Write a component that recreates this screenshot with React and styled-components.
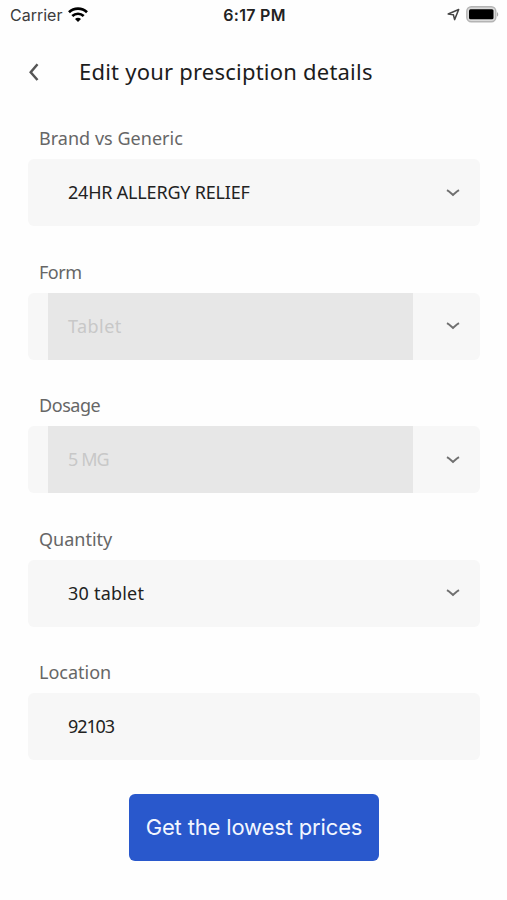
import React, { useState } from 'react'
import styled, { createGlobalStyle } from 'styled-components'

const App = () => {
  const [location, setLocation] = useState('92103')

  return (
    <Screen>
      <GlobalStyle />
      <StatusBar>
        <Carrier>
          Carrier
          <WifiIcon />
        </Carrier>
        <Clock>6:17 PM</Clock>
        <StatusIcons>
          <LocationIcon />
          <BatteryIcon />
        </StatusIcons>
      </StatusBar>
      <Header>
        <BackButton type='button' aria-label='Back'>
          <svg width='12' height='20' viewBox='0 0 12 20' fill='none'>
            <path d='M9.5 2.2L2.7 10.2L9.5 18' stroke='#555' strokeWidth='2.5' />
          </svg>
        </BackButton>
        <Title>Edit your presciption details</Title>
      </Header>
      <Form onSubmit={e => e.preventDefault()}>
        <SelectField label='Brand vs Generic' labelSpacing={0.03} value='24HR ALLERGY RELIEF' spacing={-0.2} />
        <SelectField label='Form' labelSpacing={-0.5} value='Tablet' spacing={0.45} disabled />
        <SelectField label='Dosage' labelSpacing={-0.45} value='5 MG' spacing={-0.9} disabled />
        <SelectField label='Quantity' value='30 tablet' spacing={0.22} />
        <Field>
          <Label htmlFor='location'>Location</Label>
          <Box>
            <Input
              id='location'
              value={location}
              onChange={e => setLocation(e.target.value)}
            />
          </Box>
        </Field>
        <SubmitButton type='submit'>Get the lowest prices</SubmitButton>
      </Form>
    </Screen>
  )
}

const SelectField = ({ label, value, disabled, spacing, labelSpacing }) => (
  <Field>
    <Label $spacing={labelSpacing}>{label}</Label>
    <Box>
      <Value $disabled={disabled} $spacing={spacing}>
        <span>{value}</span>
      </Value>
      <Arrow>
        <svg width='14' height='8' viewBox='0 0 14 8' fill='none'>
          <path d='M1 1.2C3 2.3 4.8 4 7 5.9C9.2 4 11 2.3 13 1.2' stroke='#707070' strokeWidth='2' />
        </svg>
      </Arrow>
    </Box>
  </Field>
)

const WifiIcon = () => (
  <svg width='20' height='15' viewBox='0 0 20 15' fill='none' stroke='#000' strokeWidth='2.7'>
    <path d='M1 5.3C6 0.5 14 0.5 19 5.3' />
    <path d='M4.3 9C7.5 6 12.5 6 15.7 9' />
    <path d='M10 15L7 12C8.7 10.3 11.3 10.3 13 12Z' fill='#000' stroke='none' />
  </svg>
)

const LocationIcon = () => (
  <svg width='13' height='13' viewBox='0 0 13 13' fill='none'>
    <path d='M1.2 6L11.7 1.5L7.6 11.6L6.4 6.8Z' stroke='#444' strokeWidth='1.5' strokeLinejoin='round' />
  </svg>
)

const BatteryIcon = () => (
  <svg width='33' height='17' viewBox='0 0 33 17'>
    <rect x='0.8' y='0.8' width='29' height='15' rx='4.5' fill='#dadada' stroke='#b4b4b4' strokeWidth='1.4' />
    <rect x='3' y='3.3' width='24.5' height='10' rx='1.5' fill='#000' />
    <path d='M31 6.2C32.6 6.8 32.6 10 31 10.6Z' fill='#aaa' />
  </svg>
)

const GlobalStyle = createGlobalStyle`
  body {
    margin: 0;
    background: #fff;
  }

  * {
    box-sizing: border-box;
  }
`

const Screen = styled.div`
  height: 900px;
  overflow: hidden;
  background: #fefefe;
  font-family: 'Noto Sans', sans-serif;
`

const StatusBar = styled.div`
  display: grid;
  grid-template-columns: 1fr auto 1fr;
  align-items: center;
  height: 29px;
  padding: 0 8px 0 10px;
  font-family: Inter, sans-serif;
  font-size: 16px;
`

const Carrier = styled.div`
  display: flex;
  align-items: center;
  gap: 6px;
  color: #3c3c3c;
`

const Clock = styled.div`
  font-weight: 600;
  letter-spacing: 0.3px;
  color: #222;
`

const StatusIcons = styled.div`
  display: flex;
  align-items: center;
  justify-content: flex-end;
  gap: 6px;
`

const Header = styled.header`
  display: flex;
  align-items: center;
  height: 85px;
  padding-left: 28px;
`

const BackButton = styled.button`
  display: flex;
  width: 51px;
  padding: 0;
  border: none;
  background: transparent;
`

const Title = styled.h1`
  margin: 0;
  padding-bottom: 2px;
  font-size: 22px;
  font-weight: 400;
  letter-spacing: 0.22px;
  color: #1c1c1c;
`

const Form = styled.form`
  padding: 10px 27px 0 28px;
`

const Field = styled.div`
  height: 133.5px;
`

const Label = styled.label`
  display: block;
  height: 35px;
  padding: 0 11px;
  font-size: 18px;
  line-height: 29px;
  letter-spacing: ${({ $spacing }) => $spacing || 0}px;
  color: #666;
`

const Box = styled.div`
  display: flex;
  height: 67px;
  padding-left: 20px;
  border-radius: 6px;
  background: #f7f7f7;
`

const Value = styled.div`
  display: flex;
  align-items: center;
  width: 365px;
  padding: 0 0 1px 20px;
  font-size: 18px;
  letter-spacing: ${({ $spacing }) => $spacing || 0}px;
  color: ${({ $disabled }) => ($disabled ? '#c8c8c8' : '#222')};
  background: ${({ $disabled }) => ($disabled ? '#e7e7e7' : 'transparent')};
`

const Arrow = styled.div`
  display: flex;
  align-items: center;
  padding-left: 33px;
`

const Input = styled.input`
  width: 365px;
  padding: 0 0 1px 20px;
  border: none;
  outline: none;
  background: transparent;
  font-family: inherit;
  font-size: 18px;
  letter-spacing: -1.1px;
  color: #222;
`

const SubmitButton = styled.button`
  display: block;
  width: 250px;
  height: 67px;
  margin: 2px auto 0 101px;
  padding: 0;
  border: none;
  border-radius: 6px;
  background: #2958cc;
  color: #f2f6ff;
  font-family: Inter, sans-serif;
  font-size: 22px;
  letter-spacing: -0.15px;
`

export default App
